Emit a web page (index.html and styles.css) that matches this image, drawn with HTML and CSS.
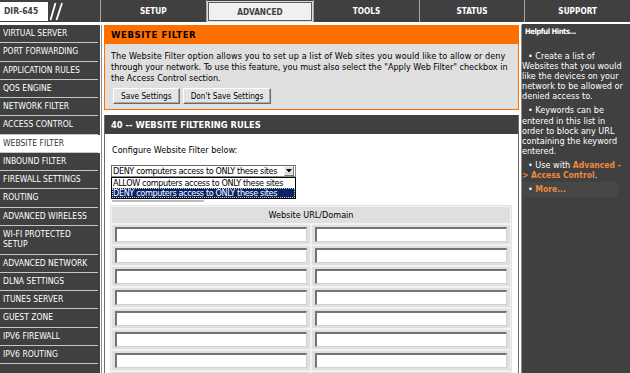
FILE: index.html
```html
<!DOCTYPE html>
<html>
<head>
<meta charset="utf-8">
<title>DIR-645 Website Filter</title>
<link rel="stylesheet" href="styles.css">
</head>
<body>
<div class="topbar">
  <div class="brand">
    <span class="model">DIR-645</span>
    <svg class="slashes" width="16" height="20" viewBox="0 0 16 20"><line x1="1.5" y1="19" x2="6.5" y2="2" stroke="#fff" stroke-width="1.8"/><line x1="7.5" y1="19" x2="13" y2="2" stroke="#fff" stroke-width="1.8"/></svg>
  </div>
  <div class="tab">SETUP</div>
  <div class="tab active"><span>ADVANCED</span></div>
  <div class="tab">TOOLS</div>
  <div class="tab">STATUS</div>
  <div class="tab">SUPPORT</div>
</div>
<div class="layout">
  <nav class="sidenav">
    <div class="navitem">VIRTUAL SERVER</div>
    <div class="navitem">PORT FORWARDING</div>
    <div class="navitem">APPLICATION RULES</div>
    <div class="navitem">QOS ENGINE</div>
    <div class="navitem">NETWORK FILTER</div>
    <div class="navitem">ACCESS CONTROL</div>
    <div class="navitem active">WEBSITE FILTER</div>
    <div class="navitem">INBOUND FILTER</div>
    <div class="navitem">FIREWALL SETTINGS</div>
    <div class="navitem">ROUTING</div>
    <div class="navitem">ADVANCED WIRELESS</div>
    <div class="navitem two">WI-FI PROTECTED<br>SETUP</div>
    <div class="navitem">ADVANCED NETWORK</div>
    <div class="navitem">DLNA SETTINGS</div>
    <div class="navitem">ITUNES SERVER</div>
    <div class="navitem">GUEST ZONE</div>
    <div class="navitem">IPV6 FIREWALL</div>
    <div class="navitem">IPV6 ROUTING</div>
  </nav>
  <main class="content">
    <section class="panel">
      <div class="panel-head">WEBSITE FILTER</div>
      <div class="panel-body">
        <p class="intro"><span class="l1">The Website Filter option allows you to set up a list of Web sites you would like to allow or deny</span><br><span class="l2">through your network. To use this feature, you must also select the "Apply Web Filter" checkbox in</span><br>the Access Control section.</p>
        <div class="buttons">
          <button class="btn">Save Settings</button>
          <button class="btn">Don't Save Settings</button>
        </div>
      </div>
    </section>
    <section class="rules">
      <div class="rules-head">40 -- WEBSITE FILTERING RULES</div>
      <div class="rules-body">
        <div class="configure">Configure Website Filter below:</div>
        <div class="select-wrap">
          <div class="select">
            <span class="select-text">DENY computers access to ONLY these sites</span>
            <span class="arrow"><svg width="6" height="4" viewBox="0 0 6 4"><path d="M0 0H6L3 3.5Z" fill="#000"/></svg></span>
          </div>
          <div class="options">
            <div class="option">ALLOW computers access to ONLY these sites</div>
            <div class="option selected">DENY computers access to ONLY these sites</div>
          </div>
        </div>
        <div class="ghost"></div>
        <div class="urls">
          <div class="urls-head">Website URL/Domain</div>
          <div class="cell"><span class="field"></span></div><div class="cell"><span class="field"></span></div>
          <div class="cell"><span class="field"></span></div><div class="cell"><span class="field"></span></div>
          <div class="cell"><span class="field"></span></div><div class="cell"><span class="field"></span></div>
          <div class="cell"><span class="field"></span></div><div class="cell"><span class="field"></span></div>
          <div class="cell"><span class="field"></span></div><div class="cell"><span class="field"></span></div>
          <div class="cell"><span class="field"></span></div><div class="cell"><span class="field"></span></div>
          <div class="cell"><span class="field"></span></div><div class="cell"><span class="field"></span></div>
          <div class="cell"><span class="field"></span></div><div class="cell"><span class="field"></span></div>
          <div class="cell"><span class="field"></span></div><div class="cell"><span class="field"></span></div>
        </div>
      </div>
    </section>
  </main>
  <aside class="hints">
    <div class="hint-title">Helpful Hints...</div>
    <p class="hint first"><span class="bullet">•</span> Create a list of<br>Websites that you would<br>like the devices on your<br>network to be allowed or<br>denied access to.</p>
    <p class="hint"><span class="bullet">•</span> Keywords can be<br>entered in this list in<br>order to block any URL<br>containing the keyword<br>entered.</p>
    <p class="hint"><span class="bullet">•</span> Use with <span class="hint-link">Advanced -<br>&gt; Access Control</span>.</p>
    <p class="hint more"><span class="bullet">•</span> <span class="hint-link">More...</span></p>
  </aside>
</div>
</body>
</html>
```

FILE: styles.css
```css
html, body {
  margin: 0;
  padding: 0;
  overflow: hidden;
}
body {
  width: 630px;
  height: 373px;
  background: #fff;
  font-family: "DejaVu Sans Condensed", "DejaVu Sans", sans-serif;
  font-size: 9px;
  color: #000;
}

/* top bar */
.topbar {
  display: flex;
  height: 22px;
  background: #404040;
}
.brand {
  width: 100px;
  flex: none;
  display: flex;
  align-items: flex-start;
}
.model {
  margin-top: 2px;
  width: 44px;
  height: 19px;
  line-height: 19px;
  padding-left: 4px;
  background: #fff;
  color: #404040;
  font-weight: bold;
  font-size: 8.5px;
}
.slashes {
  margin: 1px 0 0 1px;
}
.tab {
  flex: 1;
  border-left: 1px solid #a4a4a4;
  color: #fff;
  font-weight: bold;
  font-size: 8.2px;
  display: flex;
  align-items: center;
  justify-content: center;
}
.tab.active {
  padding: 2px 1px 1px 1px;
  align-items: stretch;
}
.tab.active span {
  flex: 1;
  display: flex;
  align-items: center;
  justify-content: center;
  background: #f1f1f1;
  color: #404040;
  border: 1px solid #5c5c5c;
  box-shadow: 0 0 0 1px #dcdcdc;
}

/* layout */
.layout {
  display: flex;
  margin-top: 3px;
  height: 348px;
}
.sidenav {
  width: 100px;
  flex: none;
  background: #404040;
}
.navitem {
  box-sizing: border-box;
  height: 18.25px;
  line-height: 17.25px;
  padding: 0 0 1px 3px;
  color: #fff;
  font-size: 8.5px;
  white-space: nowrap;
  background: linear-gradient(#c6c6c6, #c6c6c6) no-repeat 0 100% / 98px 1px;
}
.navitem.active {
  background-color: #fff;
  color: #333;
}
.navitem.two {
  height: 28.75px;
  line-height: 10px;
  padding-top: 3.25px;
}

/* main content */
.content {
  width: 415px;
  flex: none;
  margin-left: 1px;
  border-left: 1px solid #8c8c8c;
  border-right: 1px solid #8c8c8c;
  padding: 0 2px;
  overflow: hidden;
}
.panel {
  border: 1px solid #ff6f00;
}
.panel-head {
  background: #ff6f00;
  height: 18px;
  line-height: 18px;
  padding-left: 6px;
  font-weight: bold;
  font-size: 9.5px;
  letter-spacing: 0.6px;
  color: #000;
}
.panel-body {
  background: #dfdfdf;
  padding: 7px 6px 5px 6px;
}
.intro {
  margin: 0;
  line-height: 11px;
  white-space: nowrap;
}
.intro .l1 {
  letter-spacing: 0.08px;
}
.intro .l2 {
  letter-spacing: -0.02px;
}
.buttons {
  display: flex;
  gap: 3px;
  margin-top: 4px;
  padding-left: 2px;
}
.btn {
  height: 16px;
  box-sizing: border-box;
  padding: 0 7px;
  font-family: inherit;
  font-size: 8.2px;
  line-height: 13px;
  color: #000;
  background: #e4e4e4;
  border: 1px solid;
  border-color: #fff #6a6a6a #6a6a6a #fff;
  box-shadow: inset -1px -1px 0 #a9a9a9;
}

.rules {
  margin-top: 5px;
  border-left: 1px solid #6b6b6b;
  border-right: 1px solid #6b6b6b;
}
.rules-head {
  background: #404040;
  height: 19px;
  line-height: 19px;
  padding-left: 6px;
  color: #fff;
  font-weight: bold;
  font-size: 9.3px;
}
.rules-body {
  padding: 11px 5px 0 5px;
  height: 300px;
}
.configure {
  line-height: 11px;
  padding-left: 2px;
}
.select-wrap {
  position: relative;
  width: 185px;
  margin: 8.5px 0 0 1px;
}
.select {
  display: flex;
  box-sizing: border-box;
  height: 12px;
  border: 1px solid #8a8a8a;
  border-top-color: #6a6a6a;
  border-left-color: #6a6a6a;
  background: #fff;
}
.select-text {
  flex: 1;
  padding-left: 1px;
  line-height: 10px;
  white-space: nowrap;
  letter-spacing: -0.35px;
}
.arrow {
  width: 10px;
  margin: 0 1px 0 0;
  box-sizing: border-box;
  background: #e0e0e0;
  border: 1px solid;
  border-color: #f6f6f6 #7a7a7a #7a7a7a #f6f6f6;
  display: flex;
  align-items: center;
  justify-content: center;
}
.options {
  position: absolute;
  top: 100%;
  left: 0;
  width: 185px;
  box-sizing: border-box;
  border: 1px solid #000;
  background: #fff;
}
.option {
  height: 10.3px;
  line-height: 10.3px;
  padding-left: 1px;
  white-space: nowrap;
  letter-spacing: -0.35px;
}
.option.selected {
  background: #0a246a;
  color: #fff;
  outline: 1px dotted #d8d8a8;
  outline-offset: -1px;
}
.ghost {
  width: 92px;
  height: 2px;
  margin: 23px 0 0 2px;
  background: #bcbcbc;
}
.urls {
  margin-top: 3px;
  width: 402px;
  box-sizing: border-box;
  padding: 2px;
  display: grid;
  grid-template-columns: 1fr 1fr;
  gap: 2px;
  background: #f2f2f2;
  box-shadow: inset 0 0 0 1px #e3e3e3;
}
.urls-head {
  grid-column: 1 / 3;
  height: 16px;
  line-height: 16px;
  text-align: center;
  background: #dfdfdf;
}
.cell {
  background: #e0e0e0;
  padding: 2px 3px 2px 3px;
}
.field {
  display: block;
  height: 15px;
  box-sizing: border-box;
  background: #fff;
  border-top: 2px solid #737373;
  border-left: 2px solid #737373;
  border-right: 1px solid #d2d2d2;
  border-bottom: 1px solid #d2d2d2;
}

/* hints */
.hints {
  width: 108px;
  flex: none;
  margin-top: -1px;
  background: #404040;
  color: #fff;
  padding-top: 3px;
  overflow: hidden;
}
.hint-title {
  padding-left: 3px;
  line-height: 10.2px;
  font-weight: bold;
  font-size: 7.6px;
  letter-spacing: -0.45px;
}
.hint {
  margin: 3.8px 0 0 0;
  line-height: 10.2px;
  white-space: nowrap;
}
.hint.first {
  margin-top: 13.4px;
}
.bullet {
  margin-left: 6px;
}
.hint-link {
  color: #f0883e;
  font-weight: bold;
  font-size: 8.5px;
}
.hint.more {
  width: 96px;
  margin-top: 1.8px;
  padding: 2px 0;
  background: #474747;
}
```
